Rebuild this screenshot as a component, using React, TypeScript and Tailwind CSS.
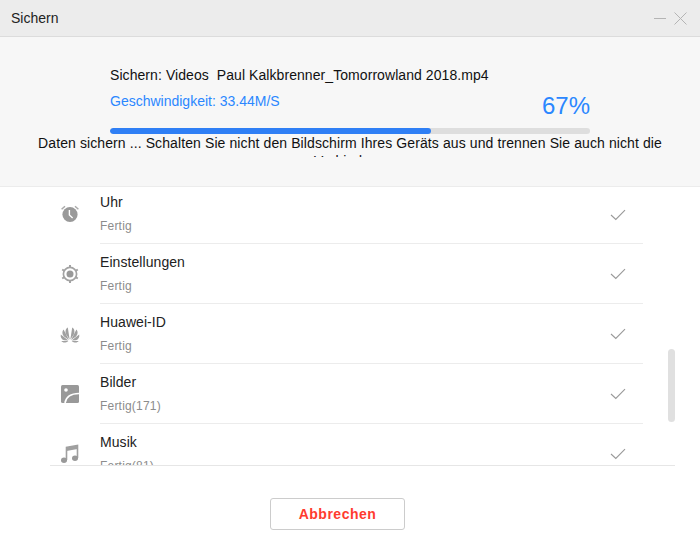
import React from "react";

const Clock = () => (
  <svg width="20" height="20" viewBox="0 0 20 20" fill="none">
    <circle cx="10" cy="10.5" r="7.6" fill="#999" />
    <path d="M9.4 6V11L12.6 14" stroke="#fff" strokeWidth="1.4" fill="none" />
    <path d="M1.6 5.2L5 2.2M18.4 5.2L15 2.2" stroke="#aaa" strokeWidth="1.5" />
  </svg>
);

const Gear = () => (
  <svg width="20" height="20" viewBox="0 0 20 20" fill="none">
    <circle cx="10" cy="10" r="6.6" stroke="#a3a3a3" strokeWidth="1.7" />
    <circle cx="10" cy="10" r="3.5" fill="#999" />
    <path d="M10 1V3.5M10 16.5V19M2.2 5.5L4.4 6.8M15.6 13.2L17.8 14.5M2.2 14.5L4.4 13.2M15.6 6.8L17.8 5.5" stroke="#a3a3a3" strokeWidth="2" />
  </svg>
);

const Huawei = () => (
  <svg width="20" height="16" viewBox="0 0 20 16" fill="#a0a0a0">
    <path d="M9.7 12.8L7.8 0.4C5.4 1.6 5 5 6.2 7.6ZM10.3 12.8L12.2 0.4C14.6 1.6 15 5 13.8 7.6Z" />
    <path d="M9 13L3.6 2.6C1.8 4.4 2 7.8 4 9.4ZM11 13L16.4 2.6C18.2 4.4 18 7.8 16 9.4Z" />
    <path d="M8.4 13.4L0.8 7.4C0.2 10 1.6 12.4 4 13.2ZM11.6 13.4L19.2 7.4C19.8 10 18.4 12.4 16 13.2Z" />
    <path d="M8.4 14.1H1.4C2.6 16 5.6 16.2 8.4 14.1ZM11.6 14.1H18.6C17.4 16 14.4 16.2 11.6 14.1Z" />
  </svg>
);

const Picture = () => (
  <svg width="20" height="20" viewBox="0 0 20 20" fill="none">
    <rect x="1" y="1" width="18" height="18" rx="1.5" fill="#999" />
    <circle cx="6" cy="6" r="1.8" fill="#fff" />
    <path d="M5 19C6 13 11 9.5 19 9.5" stroke="#fff" strokeWidth="1.6" fill="none" />
  </svg>
);

const Music = () => (
  <svg width="20" height="20" viewBox="0 0 20 20" fill="none">
    <path d="M6.5 16V3.5L17.5 1.5V14" stroke="#a0a0a0" strokeWidth="1.6" />
    <path d="M6.5 3.5L17.5 1.5V5L6.5 7Z" fill="#a0a0a0" />
    <ellipse cx="4" cy="16.3" rx="3" ry="2.7" fill="#999" />
    <ellipse cx="15" cy="14.3" rx="3" ry="2.7" fill="#999" />
  </svg>
);

const Check = () => (
  <svg width="16" height="12" viewBox="0 0 16 12" fill="none">
    <path d="M1 6L5.8 10.5L15 1.2" stroke="#999" strokeWidth="1.1" />
  </svg>
);

const rows = [
  { name: "Uhr", sub: "Fertig", icon: <Clock />, h: "h-[57px]", top: "pb-[3px]" },
  { name: "Einstellungen", sub: "Fertig", icon: <Gear />, h: "h-[60px]", top: "pt-[0px]" },
  { name: "Huawei-ID", sub: "Fertig", icon: <Huawei />, h: "h-[60px]", top: "pt-[2px]" },
  { name: "Bilder", sub: "Fertig(171)", icon: <Picture />, h: "h-[60px]", top: "pt-[0px]" },
  { name: "Musik", sub: "Fertig(81)", icon: <Music />, h: "h-[60px]", top: "pt-[0px]" },
];

export default function App() {
  return (
    <div className="w-[700px] h-[560px] bg-white flex flex-col overflow-hidden font-['Liberation_Sans',Arial,sans-serif]">
      <header className="h-[37px] shrink-0 bg-[#ececec] border-b border-[#dcdcdc] flex items-center justify-between pl-[11px] pr-[13px]">
        <span className="text-[14px] text-[#222]">Sichern</span>
        <div className="flex items-center gap-[8px]">
          <svg width="12" height="12" viewBox="0 0 12 12" fill="none"><path d="M0 6.5H12" stroke="#b4b4b4" strokeWidth="1" /></svg>
          <svg width="13" height="13" viewBox="0 0 13 13" fill="none"><path d="M0.5 0.5L12.5 12.5M12.5 0.5L0.5 12.5" stroke="#b4b4b4" strokeWidth="1" /></svg>
        </div>
      </header>

      <section className="h-[150px] shrink-0 bg-[#f7f7f7] border-b border-[#ececec] flex flex-col items-center">
        <div className="w-[480px] pt-[29px]">
          <div className="text-[14px] tracking-[0.07px] leading-[18px] text-[#111] whitespace-pre">Sichern: Videos  Paul Kalkbrenner_Tomorrowland 2018.mp4</div>
          <div className="flex justify-between items-start h-[34px] mt-[8px]">
            <span className="text-[14px] leading-[18px] text-[#2b87ff]">Geschwindigkeit: 33.44M/S</span>
            <span className="text-[24px] leading-[28px] text-[#2b87ff]">67%</span>
          </div>
          <div className="h-[6px] mt-[2px] bg-[#dedede] rounded-full overflow-hidden">
            <div className="h-full w-[321px] bg-[#2f7ff5] rounded-full" />
          </div>
        </div>
        <div className="w-[640px] h-[23px] overflow-hidden text-center text-[14px] tracking-[0.1px] leading-[18px] text-[#111]">
          Daten sichern ... Schalten Sie nicht den Bildschirm Ihres Geräts aus und trennen Sie auch nicht die Verbindung
        </div>
      </section>

      <div className="relative h-[279px] shrink-0 ml-[50px] mr-[25px] border-b border-[#e6e6e6] overflow-hidden">
        {rows.map((r) => (
          <div key={r.name} className={`${r.h} shrink-0 flex items-center`}>
            <div className="w-[50px] shrink-0 flex justify-center pr-[10px]">
              <div className={r.top}>{r.icon}</div>
            </div>
            <div className="w-[543px] h-full border-b border-[#ececec] flex items-center justify-between pr-[17px]">
              <div className="self-end h-[60px] shrink-0">
                <div className="text-[14px] tracking-[0.07px] leading-[18px] pt-[10px] text-[#222]">{r.name}</div>
                <div className="text-[12px] tracking-[0.2px] leading-[16px] mt-[7px] text-[#8c8c8c]">{r.sub}</div>
              </div>
              <Check />
            </div>
          </div>
        ))}
        <div className="absolute left-[618px] top-[162px] w-[7px] h-[73px] rounded-full bg-[#e0e0e0]" />
      </div>

      <footer className="flex-1 flex justify-center pt-[32px] pr-[25px]">
        <button className="w-[135px] h-[32px] border border-[#cccccc] rounded-[3px] bg-white text-[14px] font-bold tracking-[0.5px] text-[#ff3b2f]">
          Abbrechen
        </button>
      </footer>
    </div>
  );
}
